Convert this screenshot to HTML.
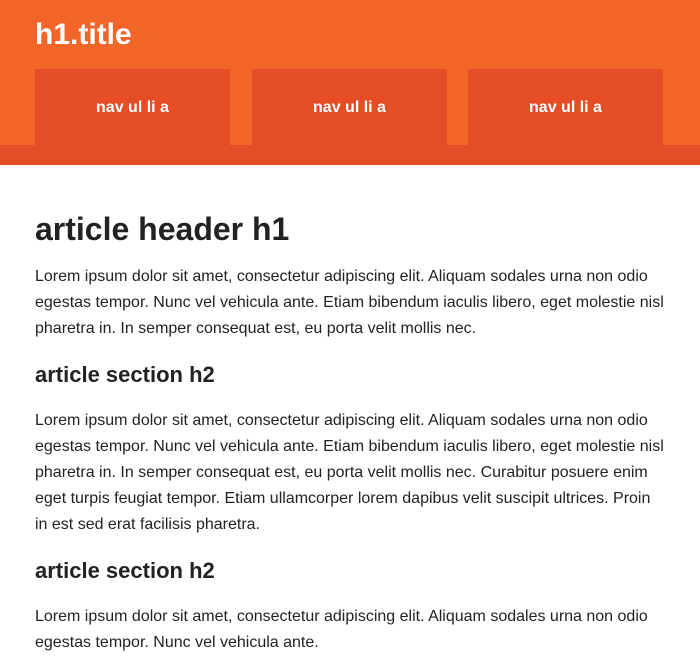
<!DOCTYPE html>
<html><head><style>
*{margin:0;padding:0;box-sizing:border-box}
body{width:700px;height:620px;overflow:hidden;font-family:"Liberation Sans",Arial,sans-serif;background:#fff;color:#222}
header{background:#F26529;height:165px;position:relative}
header h1{position:absolute;left:35px;top:15px;font-size:30px;color:#fff;font-weight:bold;line-height:40px}
.band{position:absolute;left:0;top:145px;width:700px;height:20px;background:#E44D26}
nav a{position:absolute;top:69px;height:76px;width:195px;background:#E44D26;color:#fff;font-weight:bold;font-size:16px;text-align:center;line-height:78px;text-decoration:none}
article{position:absolute;left:35px;top:165px;width:632px}
article h1{font-size:32px;line-height:40px;margin-top:44px;margin-bottom:15px}
p{font-size:16px;line-height:26px}
h2{font-size:22px;line-height:30px;margin:18px 0 18px}
</style></head><body>
<header><h1>h1.title</h1><div class="band"></div>
<nav><a style="left:35px">nav ul li a</a><a style="left:252px">nav ul li a</a><a style="left:468px">nav ul li a</a></nav></header>
<article>
<h1>article header h1</h1>
<p>Lorem ipsum dolor sit amet, consectetur adipiscing elit. Aliquam sodales urna non odio egestas tempor. Nunc vel vehicula ante. Etiam bibendum iaculis libero, eget molestie nisl pharetra in. In semper consequat est, eu porta velit mollis nec.</p>
<h2>article section h2</h2>
<p>Lorem ipsum dolor sit amet, consectetur adipiscing elit. Aliquam sodales urna non odio egestas tempor. Nunc vel vehicula ante. Etiam bibendum iaculis libero, eget molestie nisl pharetra in. In semper consequat est, eu porta velit mollis nec. Curabitur posuere enim eget turpis feugiat tempor. Etiam ullamcorper lorem dapibus velit suscipit ultrices. Proin in est sed erat facilisis pharetra.</p>
<h2>article section h2</h2>
<p>Lorem ipsum dolor sit amet, consectetur adipiscing elit. Aliquam sodales urna non odio egestas tempor. Nunc vel vehicula ante.</p>
</article>
</body></html>
